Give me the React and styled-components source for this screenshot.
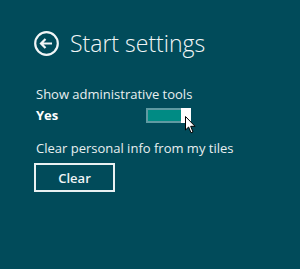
import React from "react";
import styled, { createGlobalStyle } from "styled-components";

const Global = createGlobalStyle`
  html, body {
    margin: 0;
    padding: 0;
    background: #014b5a;
  }
  #root {
    width: 300px;
    height: 269px;
  }
`;

const Pane = styled.div`
  width: 300px;
  height: 269px;
  box-sizing: border-box;
  background: #014b5a;
  padding: 31px 0 0 34px;
  display: flex;
  flex-direction: column;
  font-family: "Open Sans", "Noto Sans", sans-serif;
  color: #ffffff;
`;

const Header = styled.div`
  display: flex;
  align-items: center;
  gap: 11px;
  height: 25px;
`;

const Title = styled.h1`
  margin: 0;
  font-size: 23px;
  font-weight: 300;
  line-height: 25px;
  color: #f2f6f7;
`;

const Label = styled.div`
  margin-top: ${(p) => p.$top}px;
  margin-left: 2px;
  font-size: 13px;
  line-height: 16px;
  color: #e8eff0;
`;

const Row = styled.div`
  display: flex;
  align-items: center;
  margin-top: 5px;
  margin-left: 2px;
  height: 16px;
`;

const Value = styled.span`
  width: 110px;
  font-size: 13px;
  font-weight: 700;
  color: #ffffff;
`;

const ToggleWrap = styled.div`
  position: relative;
`;

const Track = styled.div`
  width: 45px;
  height: 15px;
  box-sizing: border-box;
  border: 2px solid #5f9aa2;
  border-right: none;
  background: #008b84;
  display: flex;
  justify-content: flex-end;
`;

const Thumb = styled.div`
  width: 10px;
  height: 15px;
  margin: -2px 0;
  background: #ffffff;
`;

const Cursor = styled.svg`
  position: absolute;
  left: 39px;
  top: 8px;
`;

const Button = styled.button`
  margin-top: 7px;
  width: 81px;
  height: 29px;
  box-sizing: border-box;
  border: 2px solid #e9f1f2;
  background: transparent;
  color: #f0f5f6;
  font-family: "Open Sans", "Noto Sans", sans-serif;
  font-size: 13px;
  font-weight: 600;
  padding: 0;
`;

export default function App() {
  return (
    <>
      <Global />
      <Pane>
        <Header>
          <svg width="25" height="25" viewBox="0 0 25 25">
            <circle cx="12.5" cy="12.5" r="11.3" fill="none" stroke="#f2f6f7" strokeWidth="2.2" />
            <path d="M7 12.5 H18 M11.5 8 L7 12.5 L11.5 17" fill="none" stroke="#f2f6f7" strokeWidth="2.2" strokeLinejoin="miter" />
          </svg>
          <Title>Start settings</Title>
        </Header>
        <Label $top={30}>Show administrative tools</Label>
        <Row>
          <Value>Yes</Value>
          <ToggleWrap>
            <Track>
              <Thumb />
            </Track>
            <Cursor width="12" height="18" viewBox="0 0 12 18">
              <path d="M0.5 0.5 L0.5 14 L3.6 11 L6 16.8 L8 16 L5.7 10.3 L10 10.3 Z" fill="#ffffff" stroke="#000000" strokeWidth="1" />
            </Cursor>
          </ToggleWrap>
        </Row>
        <Label $top={17}>Clear personal info from my tiles</Label>
        <Button>Clear</Button>
      </Pane>
    </>
  );
}
